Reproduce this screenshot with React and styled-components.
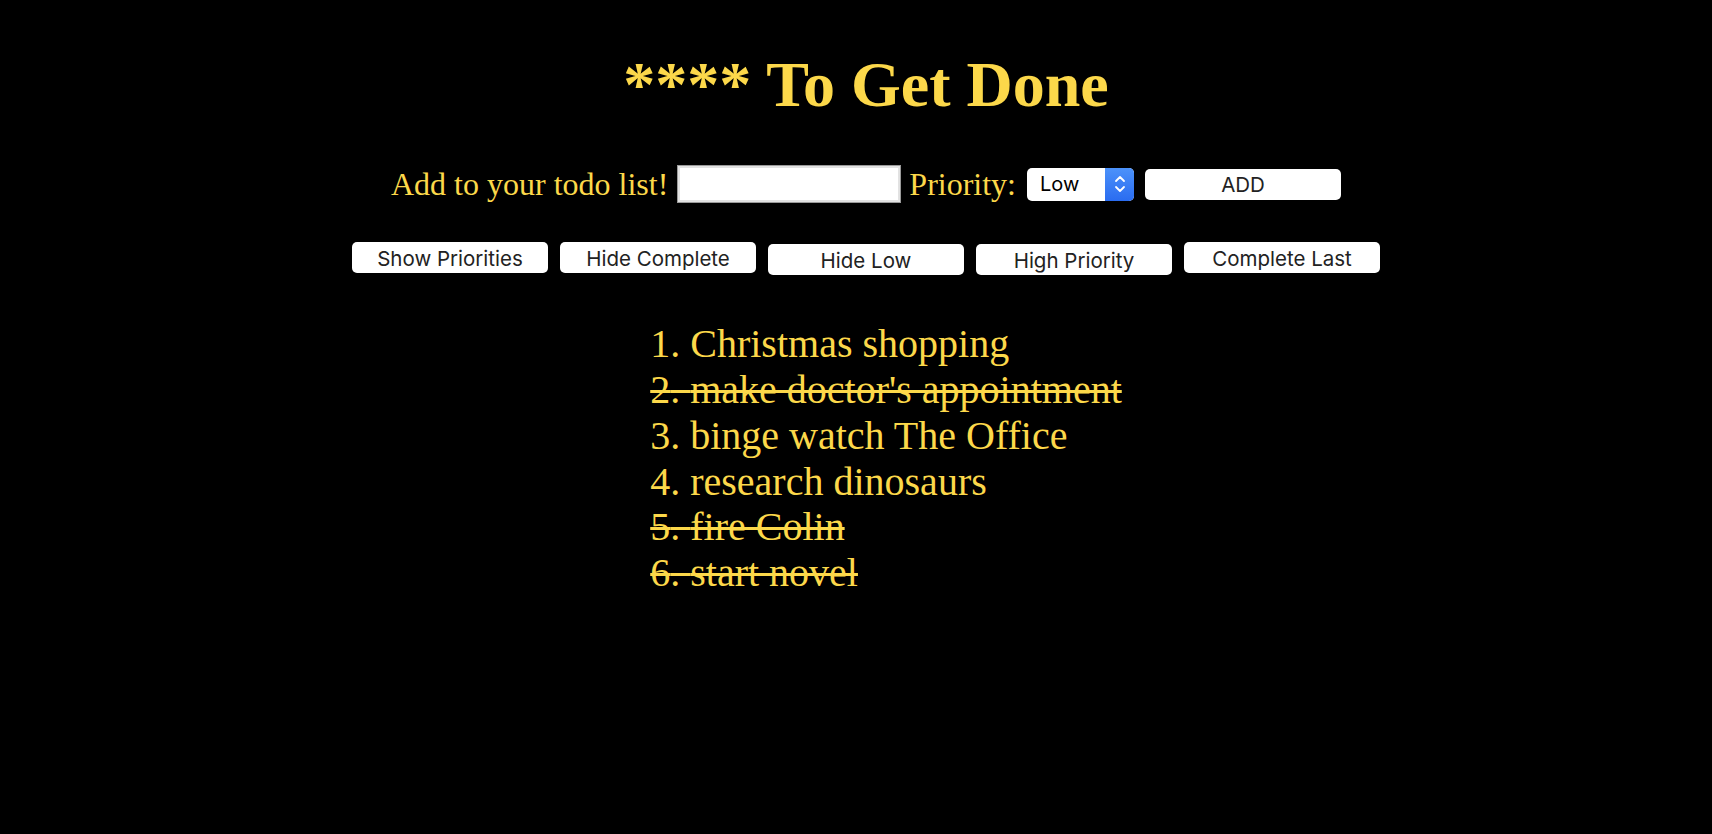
import React, { Component } from 'react';
import styled, { createGlobalStyle } from 'styled-components';

const GlobalStyle = createGlobalStyle`
    html, body {
        margin: 0;
        padding: 0;
        background-color: #000000;
    }
    body {
        font-family: "Liberation Serif", "Times New Roman", serif;
    }
`;

const gold = '#fcd84a';

const AppWrapper = styled.div`
    min-height: 834px;
    padding-left: 20px;
    display: flex;
    flex-direction: column;
    align-items: center;
    background-color: #000000;
    color: ${gold};
`;

const Title = styled.h1`
    margin: 48px 0 0 0;
    font-size: 64px;
    font-weight: bold;
    font-family: "Liberation Serif", "Times New Roman", serif;
`;

const AddRow = styled.div`
    margin-top: 43px;
    display: flex;
    align-items: center;
    font-size: 32px;
`;

const Label = styled.span`
    margin-right: ${props => props.gap || 8}px;
`;

const TextInput = styled.input`
    width: 224px;
    height: 38px;
    box-sizing: border-box;
    margin-right: 8px;
    border: 1px solid #9a9a9a;
    box-shadow: inset 0 0 0 2px #e2e2e2;
    background: #ffffff;
    font-size: 18px;
    outline: none;
`;

const SelectBox = styled.div`
    width: 107px;
    height: 33px;
    display: flex;
    margin-right: 11px;
    border-radius: 5px;
    overflow: hidden;
    background: #ffffff;
`;

const Select = styled.select`
    flex: 1;
    appearance: none;
    -webkit-appearance: none;
    border: none;
    outline: none;
    background: transparent;
    padding: 0 0 0 13px;
    font-family: "Inter", "Liberation Sans", sans-serif;
    font-size: 20px;
    color: #000000;
`;

const ArrowCap = styled.span`
    width: 29px;
    display: flex;
    align-items: center;
    justify-content: center;
    background: linear-gradient(#4c92fa, #2a6cf0);
`;

const Button = styled.button`
    width: ${props => props.wide || 196}px;
    height: 31px;
    margin-top: ${props => (props.lowered ? 2 : 0)}px;
    border: none;
    border-radius: 5px;
    background: #ffffff;
    color: #222222;
    font-family: "Inter", "Liberation Sans", sans-serif;
    font-size: 20.5px;
    padding: 1px 0 0 0;
    cursor: pointer;
`;

const FilterRow = styled.div`
    margin-top: 39px;
    display: flex;
    align-items: flex-start;
    gap: 12px;
`;

const TodoList = styled.ol`
    margin: 46px 0 0 0;
    padding-left: 40px;
    list-style: none;
    font-size: 40px;
    line-height: 45.85px;
`;

const TodoItem = styled.li`
    text-decoration: ${props => (props.done ? 'line-through' : 'none')};
    text-decoration-thickness: 3px;
`;

const todos = [
    { text: 'Christmas shopping', done: false },
    { text: "make doctor's appointment", done: true },
    { text: 'binge watch The Office', done: false },
    { text: 'research dinosaurs', done: false },
    { text: 'fire Colin', done: true },
    { text: 'start novel', done: true },
];

const filters = [
    { label: 'Show Priorities' },
    { label: 'Hide Complete' },
    { label: 'Hide Low', lowered: true },
    { label: 'High Priority', lowered: true },
    { label: 'Complete Last' },
];

class App extends Component {
    render() {
        return (
            <AppWrapper>
                <GlobalStyle />
                <Title>**** To Get Done</Title>
                <AddRow>
                    <Label gap={9}>Add to your todo list!</Label>
                    <TextInput type="text" />
                    <Label gap={11}>Priority:</Label>
                    <SelectBox>
                        <Select defaultValue="low">
                            <option value="low">Low</option>
                            <option value="high">High</option>
                        </Select>
                        <ArrowCap>
                            <svg width="12" height="20" viewBox="0 0 12 20" fill="none" stroke="#ffffff" strokeWidth="1.8" strokeLinecap="round" strokeLinejoin="round">
                                <path d="M2 7 L6 3 L10 7" />
                                <path d="M2 13 L6 17 L10 13" />
                            </svg>
                        </ArrowCap>
                    </SelectBox>
                    <Button>ADD</Button>
                </AddRow>
                <FilterRow>
                    {filters.map(f => (
                        <Button key={f.label} lowered={f.lowered}>{f.label}</Button>
                    ))}
                </FilterRow>
                <TodoList>
                    {todos.map((t, i) => (
                        <TodoItem key={t.text} done={t.done}>{i + 1}. {t.text}</TodoItem>
                    ))}
                </TodoList>
            </AppWrapper>
        );
    }
}

export default App;
